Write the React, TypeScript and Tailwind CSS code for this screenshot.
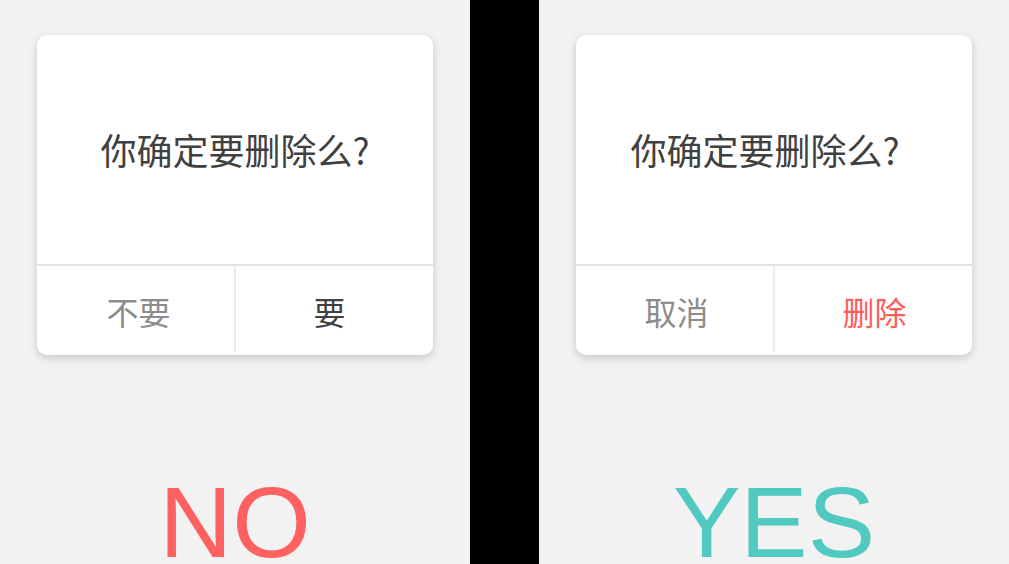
const cjk = "font-['Noto_Sans_CJK_SC','Noto_Sans',sans-serif]";

type Side = {
  cancel: string;
  cancelShift: string;
  confirm: string;
  confirmColor: string;
  label: string;
  labelColor: string;
  shift: string;
};

const Panel = ({ side }: { side: Side }) => (
  <div className="flex flex-col items-center w-[470px] h-full bg-[#f2f2f2] pt-[35px]">
    <div className="flex flex-col shrink-0 w-[396px] h-[320px] bg-white rounded-[10px] shadow-[0_3px_8px_rgba(0,0,0,0.18)] overflow-hidden">
      <div
        className={`flex flex-1 items-center justify-center text-[36px] leading-none text-[#404040] pb-[2px] ${cjk} ${side.shift}`}
      >
        你确定要删除么?
      </div>
      <div className="h-[2px] bg-[#e2e2e2]" />
      <div className="flex h-[89px]">
        <button
          className={`w-[197px] flex items-center justify-center text-[32px] leading-none text-[#8c8c8c] ${cjk}`}
        >
          <span className={side.cancelShift}>{side.cancel}</span>
        </button>
        <div className="w-[2px] mb-[3px] bg-[#ebebeb]" />
        <button
          className={`w-[197px] flex items-center justify-center text-[32px] leading-none ${cjk}`}
        >
          <span className={side.confirmColor}>{side.confirm}</span>
        </button>
      </div>
    </div>
    <p
      className={`shrink-0 mt-[127px] text-[101px] leading-[80px] font-['Liberation_Sans',Arial,sans-serif] ${side.labelColor}`}
    >
      {side.label}
    </p>
  </div>
);

export default function App() {
  return (
    <div className="flex w-[1009px] h-[564px] overflow-hidden bg-black">
      <Panel
        side={{
          cancel: "不要",
          cancelShift: "ml-[6px]",
          confirm: "要",
          confirmColor: "text-[#404040] mr-[10px]",
          label: "NO",
          labelColor: "text-[#ff6060]",
          shift: "",
        }}
      />
      <div className="w-[69px] bg-black" />
      <Panel
        side={{
          cancel: "取消",
          cancelShift: "ml-[4px]",
          confirm: "删除",
          confirmColor: "text-[#ff5c5c] ml-[2px]",
          label: "YES",
          labelColor: "text-[#50cac0]",
          shift: "pr-[18px]",
        }}
      />
    </div>
  );
}
